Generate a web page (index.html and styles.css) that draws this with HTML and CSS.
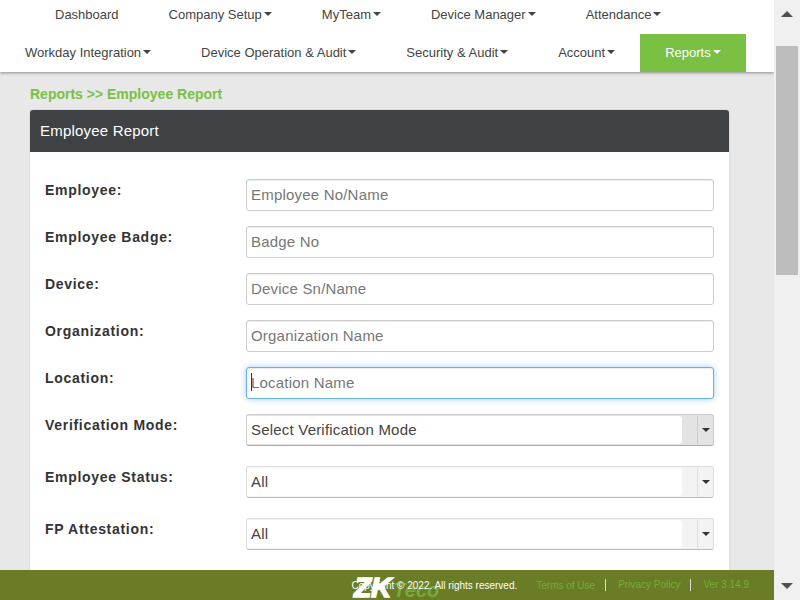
FILE: index.html
```html
<!DOCTYPE html>
<html lang="en">
<head>
  <meta charset="UTF-8">
  <title>Employee Report</title>
  <link rel="stylesheet" href="styles.css">
</head>
<body>

<div class="page">
  <div class="content">
    <nav class="topnav">
      <div class="navrow navrow-one">
        <a class="navitem nav-dashboard">Dashboard</a>
        <a class="navitem nav-company">Company Setup<span class="caret"></span></a>
        <a class="navitem nav-team">MyTeam<span class="caret"></span></a>
        <a class="navitem nav-device">Device Manager<span class="caret"></span></a>
        <a class="navitem nav-attendance">Attendance<span class="caret"></span></a>
      </div>
      <div class="navrow navrow-two">
        <a class="navitem nav-workday">Workday Integration<span class="caret"></span></a>
        <a class="navitem nav-operation">Device Operation &amp; Audit<span class="caret"></span></a>
        <a class="navitem nav-security">Security &amp; Audit<span class="caret"></span></a>
        <a class="navitem nav-account">Account<span class="caret"></span></a>
        <a class="navitem nav-reports active">Reports<span class="caret"></span></a>
      </div>
    </nav>

    <main class="main">
      <div class="breadcrumb">Reports &gt;&gt; Employee Report</div>
      <section class="panel">
        <h2 class="panel-title">Employee Report</h2>
        <div class="panel-body">
          <div class="field">
            <label class="field-label">Employee:</label>
            <input class="text-input" placeholder="Employee No/Name">
          </div>
          <div class="field">
            <label class="field-label">Employee Badge:</label>
            <input class="text-input" placeholder="Badge No">
          </div>
          <div class="field">
            <label class="field-label">Device:</label>
            <input class="text-input" placeholder="Device Sn/Name">
          </div>
          <div class="field">
            <label class="field-label">Organization:</label>
            <input class="text-input" placeholder="Organization Name">
          </div>
          <div class="field">
            <label class="field-label">Location:</label>
            <div class="text-input focused"><span class="cursor"></span>Location Name</div>
          </div>
          <div class="field field-select">
            <label class="field-label">Verification Mode:</label>
            <div class="select dark">
              <span class="select-text">Select Verification Mode</span>
              <span class="select-gap"></span>
              <span class="select-btn"><span class="caret caret-dark"></span></span>
            </div>
          </div>
          <div class="field field-select">
            <label class="field-label">Employee Status:</label>
            <div class="select">
              <span class="select-text">All</span>
              <span class="select-gap"></span>
              <span class="select-btn"><span class="caret caret-dark"></span></span>
            </div>
          </div>
          <div class="field field-select">
            <label class="field-label">FP Attestation:</label>
            <div class="select">
              <span class="select-text">All</span>
              <span class="select-gap"></span>
              <span class="select-btn"><span class="caret caret-dark"></span></span>
            </div>
          </div>
        </div>
      </section>
    </main>

    <footer class="footer">
      <div class="logo"><span class="logo-zk">ZK</span><span class="logo-teco">Teco</span></div>
      <span class="copyright">Copyright © 2022. All rights reserved.</span>
      <a class="footlink">Terms of Use</a>
      <a class="footlink footlink-sep">Privacy Policy</a>
      <a class="footlink footlink-sep">Ver 3.14.9</a>
    </footer>
  </div>

  <div class="scrollbar">
    <span class="arrow arrow-up"></span>
    <div class="thumb"></div>
    <span class="arrow arrow-down"></span>
  </div>
</div>

</body>
</html>
```

FILE: styles.css
```css
html, body {
  margin: 0;
  padding: 0;
  height: 100%;
  overflow: hidden;
}
body {
  font-family: "Liberation Sans", Arial, sans-serif;
  color: #333;
}
.page {
  display: flex;
  height: 600px;
}
.content {
  position: relative;
  width: 774px;
  height: 600px;
  overflow: hidden;
  background: #e8e8e8;
}

/* top menu */
.topnav {
  background: #fff;
  height: 72px;
  box-shadow: 0 1px 3px rgba(0, 0, 0, 0.4);
  position: relative;
}
.navrow {
  display: flex;
  font-size: 13px;
}
.navrow-one {
  height: 30px;
  margin-bottom: 4px;
}
.navrow-two {
  height: 38px;
}
.navitem {
  color: #444;
  display: flex;
  align-items: center;
  white-space: nowrap;
  padding-bottom: 2px;
}
.nav-dashboard { margin-left: 55px; }
.nav-company { margin-left: 50px; }
.nav-team { margin-left: 50px; }
.nav-device { margin-left: 50px; }
.nav-attendance { margin-left: 50px; }
.nav-workday { margin-left: 25px; }
.nav-operation { margin-left: 50px; }
.nav-security { margin-left: 50px; }
.nav-account { margin-left: 50px; }
.nav-reports { margin-left: 25px; padding: 0 25px 2px; }
.navitem.active {
  background: #7ac143;
  color: #fff;
}
.caret {
  display: inline-block;
  width: 0;
  height: 0;
  margin-left: 2px;
  border-top: 4px solid #444;
  border-left: 4px solid transparent;
  border-right: 4px solid transparent;
}
.active .caret { border-top-color: #fff; }

/* breadcrumb + panel */
.main {
  padding: 14px 45px 0 30px;
}
.breadcrumb {
  color: #7ac143;
  font-size: 14px;
  font-weight: bold;
  line-height: 16px;
  margin-bottom: 8px;
}
.panel {
  background: #fff;
  box-shadow: 0 0 2px rgba(0, 0, 0, 0.15);
  border-radius: 3px 3px 0 0;
}
.panel-title {
  margin: 0;
  height: 42px;
  line-height: 42px;
  padding-left: 10px;
  background: #3f4245;
  color: #fff;
  font-size: 15px;
  letter-spacing: 0.2px;
  font-weight: normal;
  border-radius: 3px 3px 0 0;
}
.panel-body {
  padding: 27px 15px 20px 15px;
}
.field {
  display: flex;
  height: 32px;
  margin-bottom: 15px;
}
.field-select {
  margin-bottom: 20px;
}
.field-label {
  width: 201px;
  flex: none;
  font-size: 14px;
  font-weight: bold;
  letter-spacing: 0.7px;
  line-height: 16px;
  padding-top: 3px;
  color: #333;
}
.text-input {
  box-sizing: border-box;
  flex: none;
  width: 468px;
  height: 32px;
  border: 1px solid #ccc;
  border-radius: 3px;
  padding: 0 4px 2px;
  margin: 0;
  font-family: inherit;
  font-size: 15px;
  letter-spacing: 0.2px;
  color: #777;
  background: #fff;
  box-shadow: inset 0 1px 1px rgba(0, 0, 0, 0.075);
  outline: none;
}
.text-input::placeholder {
  color: #777;
  opacity: 1;
}
.text-input.focused {
  display: flex;
  align-items: center;
  border-color: #66afe9;
  box-shadow: inset 0 1px 1px rgba(0, 0, 0, 0.075), 0 0 6px rgba(102, 175, 233, 0.6);
}
.cursor {
  width: 1px;
  height: 18px;
  background: #333;
  margin-right: -1px;
}

.select {
  box-sizing: border-box;
  flex: none;
  width: 468px;
  height: 32px;
  display: flex;
  border: 1px solid #ddd;
  border-bottom-color: #bbb;
  border-radius: 3px;
  font-size: 15px;
  letter-spacing: 0.2px;
  color: #444;
  background: #f3f3f3;
}
.select-text {
  flex: none;
  width: 435px;
  box-sizing: border-box;
  padding: 0 0 1px 4px;
  line-height: 28px;
  background: #fff;
  border-radius: 0 3px 3px 0;
  margin: 1px 0;
}
.select-gap {
  width: 15px;
  flex: none;
}
.select-btn {
  flex: 1;
  display: flex;
  align-items: center;
  justify-content: center;
  border-left: 1px solid #ddd;
  border-radius: 3px;
}
.caret-dark {
  margin: 0;
  border-top-color: #333;
}
.select.dark {
  background: #e3e3e3;
  border-color: #ccc;
  border-bottom-color: #aaa;
}
.select.dark .select-btn {
  border-left-color: #ccc;
}

/* bottom bar, sits over the page */
.footer {
  position: absolute;
  left: 0;
  right: 0;
  bottom: 0;
  height: 30px;
  background: #6b7c26;
  display: flex;
  align-items: center;
  justify-content: flex-end;
  padding-right: 25px;
  font-size: 10px;
}
.copyright {
  position: relative;
  color: #fff;
  margin-right: 19px;
}
.footlink {
  color: #72ad35;
}
.footlink-sep {
  border-left: 1px solid #ddd;
  margin-left: 10px;
  padding-left: 12px;
  line-height: 12px;
}
.logo {
  position: absolute;
  left: 354px;
  top: 3px;
  display: flex;
  align-items: baseline;
  font-style: italic;
  font-weight: bold;
  line-height: 30px;
  white-space: nowrap;
}
.logo-zk {
  color: #fff;
  font-size: 28px;
  -webkit-text-stroke: 1.5px #fff;
}
.logo-teco {
  color: #72ad35;
  font-size: 20px;
  margin-left: 2px;
}

/* window scrollbar */
.scrollbar {
  width: 26px;
  height: 600px;
  background: #f0f0f0;
  display: flex;
  flex-direction: column;
  align-items: center;
}
.thumb {
  width: 22px;
  height: 229px;
  margin-top: 29px;
  background: #bdbdbd;
}
.arrow {
  width: 0;
  height: 0;
  border-left: 6px solid transparent;
  border-right: 6px solid transparent;
}
.arrow-up {
  margin-top: 11px;
  border-bottom: 6px solid #505050;
}
.arrow-down {
  margin-top: auto;
  margin-bottom: 11px;
  border-top: 6px solid #505050;
}
```
